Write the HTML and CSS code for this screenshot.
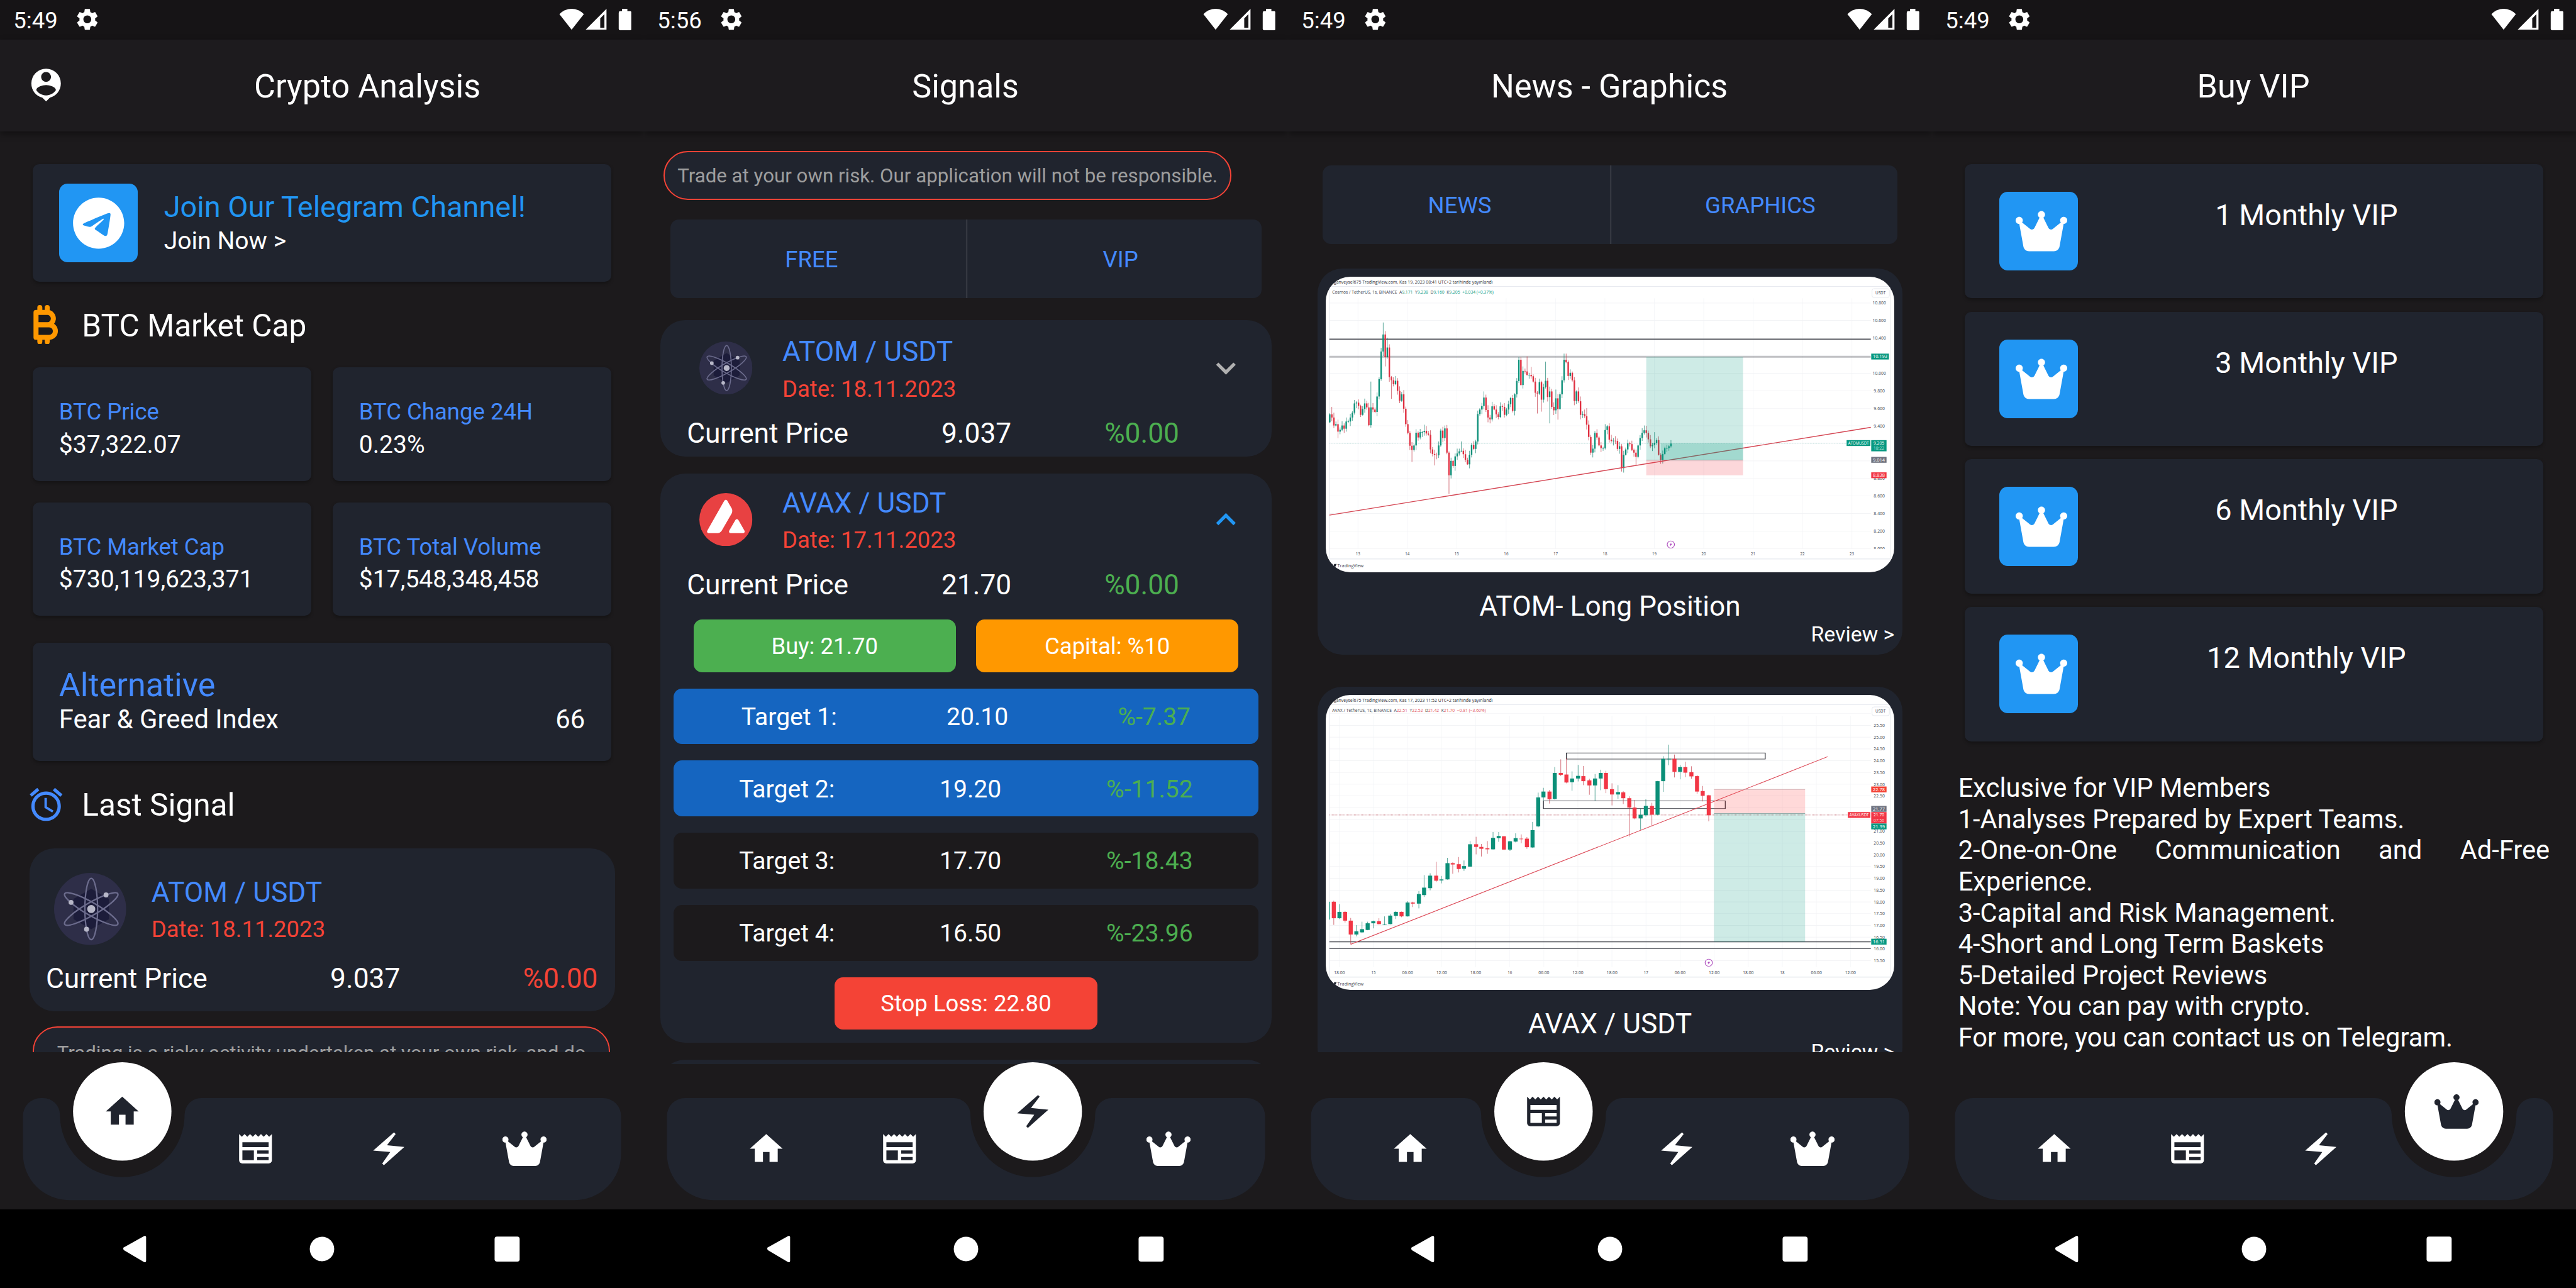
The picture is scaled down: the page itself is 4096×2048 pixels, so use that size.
FILE: index.html
```html
<!DOCTYPE html>
<html lang="en">
<head>
<meta charset="utf-8">
<title>Crypto Analysis</title>
<link rel="stylesheet" href="styles.css">
</head>
<body>
<svg class="defs" aria-hidden="true">
  <symbol id="i-gear" viewBox="0 0 24 24"><path d="M19.14 12.94c.04-.3.06-.61.06-.94 0-.32-.02-.64-.07-.94l2.03-1.58c.18-.14.23-.41.12-.61l-1.92-3.32c-.12-.22-.37-.29-.59-.22l-2.39.96c-.5-.38-1.03-.7-1.62-.94l-.36-2.54c-.04-.24-.24-.41-.48-.41h-3.84c-.24 0-.43.17-.47.41l-.36 2.54c-.59.24-1.13.57-1.62.94l-2.39-.96c-.22-.08-.47 0-.59.22L2.74 8.87c-.12.21-.08.47.12.61l2.03 1.58c-.05.3-.09.63-.09.94s.02.64.07.94l-2.03 1.58c-.18.14-.23.41-.12.61l1.92 3.32c.12.22.37.29.59.22l2.39-.96c.5.38 1.03.7 1.62.94l.36 2.54c.05.24.24.41.48.41h3.84c.24 0 .44-.17.47-.41l.36-2.54c.59-.24 1.13-.56 1.62-.94l2.39.96c.22.08.47 0 .59-.22l1.92-3.32c.12-.22.07-.47-.12-.61l-2.01-1.58zM12 15.6c-1.98 0-3.6-1.62-3.6-3.6s1.62-3.6 3.6-3.6 3.6 1.62 3.6 3.6-1.62 3.6-3.6 3.6z"/></symbol>
  <symbol id="i-state" viewBox="0 0 120 36">
    <path d="M20.5 35 0 9Q8.500 0 20.500 0T41 9Z"/>
    <path fill-rule="evenodd" d="M44 35 79 0V35ZM68.500 16V32H75.500V9Z"/>
    <path d="M105 0h9v4h4.500a2.500 2.500 0 0 1 2.500 2.500v27a2.500 2.500 0 0 1-2.500 2.500h-16.500a2.500 2.500 0 0 1-2.500-2.500v-27a2.500 2.500 0 0 1 2.500-2.500h3z"/>
  </symbol>
  <symbol id="i-account" viewBox="0 0 24 24"><path d="M12 2a9 9 0 0 0-9 9c0 4.170 2.840 7.670 6.690 8.690L12 22l2.310-2.310C18.160 18.670 21 15.170 21 11a9 9 0 0 0-9-9zm0 2c1.660 0 3 1.340 3 3s-1.340 3-3 3-3-1.340-3-3 1.340-3 3-3zm0 14.300c-2.500 0-4.710-1.280-6-3.220.03-1.990 4-3.080 6-3.080s5.970 1.090 6 3.080c-1.290 1.940-3.500 3.220-6 3.220z"/></symbol>
  <symbol id="i-telegram" viewBox="0 0 24 24"><path d="M12 2C6.480 2 2 6.480 2 12s4.480 10 10 10 10-4.480 10-10S17.520 2 12 2zm4.640 6.800c-.15 1.580-.8 5.420-1.130 7.190-.14.75-.42 1-.68 1.030-.58.05-1.020-.38-1.580-.75-.88-.58-1.380-.94-2.230-1.500-.99-.65-.35-1.010.22-1.590.15-.15 2.710-2.480 2.760-2.690a.2.2 0 0 0-.05-.18c-.06-.05-.14-.03-.21-.02-.09.02-1.490.95-4.220 2.790-.4.27-.76.41-1.080.4-.36-.01-1.040-.2-1.550-.37-.63-.2-1.120-.31-1.080-.66.02-.18.27-.36.74-.55 2.920-1.270 4.860-2.110 5.830-2.510 2.780-1.160 3.350-1.360 3.730-1.360.08 0 .27.02.39.12.1.08.13.19.14.27-.01.06.01.24 0 .38z"/></symbol>
  <symbol id="i-btc" viewBox="0 0 42 66">
    <path fill="none" stroke="#ff9800" stroke-width="8.400" stroke-linejoin="round" d="M4.500 12.500H24a9.600 10.250 0 0 1 0 20.500H4.500ZM4.500 33.200H26.600a10.400 10.500 0 0 1 0 21H4.500Z"/>
    <path fill="none" stroke="#ff9800" stroke-width="8.400" stroke-linecap="round" d="M10.900 4.300V11M23.300 4.300V11M10.900 55V61.700M23.300 55V61.700"/>
  </symbol>
  <symbol id="i-alarm" viewBox="0 0 24 24"><path d="M22 5.720l-4.600-3.860-1.290 1.530 4.600 3.860L22 5.720zM7.880 3.390L6.600 1.860 2 5.710l1.290 1.530 4.590-3.850zM12.500 8H11v6l4.750 2.850.75-1.230-4-2.370V8zM12 4c-4.970 0-9 4.030-9 9s4.020 9 9 9c4.970 0 9-4.030 9-9s-4.030-9-9-9zm0 16c-3.870 0-7-3.130-7-7s3.130-7 7-7 7 3.130 7 7-3.130 7-7 7z"/></symbol>
  <symbol id="i-home" viewBox="0 0 24 24"><path d="M10 20v-6h4v6h5v-8h3L12 3 2 12h3v8z"/></symbol>
  <symbol id="i-news" viewBox="0 0 24 24"><path d="M22 3l-1.670 1.670L18.670 3 17 4.670 15.330 3l-1.660 1.670L12 3l-1.670 1.670L8.670 3 7 4.670 5.330 3 3.670 4.670 2 3v16c0 1.100.9 2 2 2h16c1.100 0 2-.9 2-2V3zM11 19H4v-6h7v6zm9 0h-7v-2h7v2zm0-4h-7v-2h7v2zm0-4H4V8h16v3z"/></symbol>
  <symbol id="i-bolt" viewBox="0 0 24 24"><path d="M15.200 2 2.500 13.100 12.900 14 8 21 9 22 21.500 10.900 10.900 9.900 16.200 3Z"/></symbol>
  <symbol id="i-crown" viewBox="0 0 576 512"><path d="M309 106c11.400-7 19-19.700 19-34c0-22.100-17.900-40-40-40s-40 17.900-40 40c0 14.400 7.600 27 19 34L209.700 220.600c-9.100 18.200-32.700 23.400-48.600 10.700L72 160c5-6.700 8-15 8-24c0-22.100-17.900-40-40-40S0 113.900 0 136s17.900 40 40 40c.2 0 .5 0 .7 0L86.400 427.400c5.500 30.400 32 52.600 63 52.600H426.600c30.900 0 57.400-22.100 63-52.600L535.300 176c.2 0 .5 0 .7 0c22.100 0 40-17.900 40-40s-17.900-40-40-40s-40 17.900-40 40c0 9 3 17.300 8 24l-89.100 71.300c-15.900 12.700-39.500 7.500-48.600-10.700L309 106z"/></symbol>
  <symbol id="i-down" viewBox="0 0 24 24"><path d="M16.590 8.590L12 13.170 7.410 8.590 6 10l6 6 6-6z"/></symbol>
  <symbol id="i-up" viewBox="0 0 24 24"><path d="M12 8l-6 6 1.410 1.410L12 10.830l4.590 4.580L18 14z"/></symbol>
  <symbol id="i-atom" viewBox="0 0 100 100">
    <circle cx="50" cy="50" r="50" fill="#2e2e48"/>
    <path fill="#1c1c3a" d="M51.500 22 76 36V64L51.500 78 27 64V36Z"/>
    <g fill="none" stroke="#6c6c8d" stroke-width="2">
      <ellipse cx="51.500" cy="50" rx="8.800" ry="42.500"/>
      <ellipse cx="51.500" cy="50" rx="8.800" ry="42.500" transform="rotate(60 51.500 50)"/>
      <ellipse cx="51.500" cy="50" rx="8.800" ry="42.500" transform="rotate(-60 51.500 50)"/>
    </g>
    <g fill="#b8b8c8"><circle cx="51.500" cy="50" r="5.600"/><circle cx="72" cy="30.500" r="3.400"/><circle cx="23.500" cy="40.800" r="3.400"/><circle cx="45" cy="78" r="3.400"/></g>
  </symbol>
  <symbol id="i-avax" viewBox="0 0 254 254">
    <circle cx="127" cy="127" r="127" fill="#e84142"/>
    <path fill="#fff" d="M171.800 130.300c4.400-7.600 11.500-7.600 15.900 0l27.400 48.100c4.400 7.600.8 13.800-8 13.800h-55.200c-8.700 0-12.300-6.200-8-13.800zM118.800 37.700c4.400-7.600 11.400-7.600 15.800 0l6.100 11 14.400 25.300c3.500 7.200 3.500 15.700 0 22.900l-48.300 83.700c-4.400 6.800-11.700 11.100-19.800 11.600H46.900c-8.800 0-12.400-6.100-8-13.800z"/>
  </symbol>
  <symbol id="i-sysnav" viewBox="0 0 1080 132">
    <path d="M208 68.500a3 3 0 0 1 0-5L241 45q4-2 4 2V86q0 4-4 2Z"/>
    <circle cx="540" cy="66.500" r="20.500"/>
    <rect x="829.500" y="45.500" width="42" height="42" rx="4"/>
  </symbol>
</svg>

<main class="screens">
  <!-- Home -->
  <section class="phone">
    <div class="status"><span class="clock">5:49</span><svg class="gear"><use href="#i-gear"/></svg><svg class="state"><use href="#i-state"/></svg></div>
    <header class="appbar with-leading"><svg class="leading"><use href="#i-account"/></svg><h1>Crypto Analysis</h1></header>
    <div class="content">
      <div class="card telegram">
        <div class="tile"><svg class="tg-icon"><use href="#i-telegram"/></svg></div>
        <div class="telegram-text"><div class="tg-title">Join Our Telegram Channel!</div><div class="t15">Join Now &gt;</div></div>
      </div>
      <h2 class="section btc"><span class="section-icon"><svg class="btc-icon"><use href="#i-btc"/></svg></span><span>BTC Market Cap</span></h2>
      <div class="stats">
        <div class="card stat"><div class="stat-label">BTC Price</div><div class="t15">$37,322.07</div></div>
        <div class="card stat"><div class="stat-label">BTC Change 24H</div><div class="t15">0.23%</div></div>
        <div class="card stat"><div class="stat-label">BTC Market Cap</div><div class="t15">$730,119,623,371</div></div>
        <div class="card stat"><div class="stat-label">BTC Total Volume</div><div class="t15">$17,548,348,458</div></div>
      </div>
      <div class="card fear">
        <div class="fear-title">Alternative</div>
        <div class="fear-row"><span>Fear &amp; Greed Index</span><span>66</span></div>
      </div>
      <h2 class="section last"><span class="section-icon"><svg class="alarm"><use href="#i-alarm"/></svg></span><span>Last Signal</span></h2>
      <div class="last-signal">
        <div class="coin"><svg class="coin-icon"><use href="#i-atom"/></svg><div class="coin-text"><div class="pair">ATOM / USDT</div><div class="date">Date: 18.11.2023</div></div></div>
        <div class="price"><span>Current Price</span><span>9.037</span><span class="red">%0.00</span></div>
      </div>
      <div class="disclaimer">Trading is a risky activity undertaken at your own risk, and do</div>
    </div>
    <svg class="bottomnav" viewBox="0 0 1080 264">
      <path class="panel" d="M38.500 107A30 30 0 0 1 68.500 77H72.500A28 28 0 0 1 100.500 105A104.500 104.500 0 0 0 309.500 105A28 28 0 0 1 337.500 77H1011.500A30 30 0 0 1 1041.500 107V171A77 77 0 0 1 964.500 248H115.500A77 77 0 0 1 38.500 171Z"/>
      <circle cx="205" cy="99.500" r="82.500"/>
      <use class="active" href="#i-home" x="172" y="66.500" width="66" height="66"/>
      <use href="#i-news" x="395.500" y="129" width="66" height="66"/>
      <use href="#i-bolt" x="619" y="129" width="66" height="66"/>
      <use href="#i-crown" x="842.500" y="129" width="74.250" height="66"/>
    </svg>
    <svg class="sysnav"><use href="#i-sysnav"/></svg>
  </section>

  <!-- Signals -->
  <section class="phone">
    <div class="status"><span class="clock">5:56</span><svg class="gear"><use href="#i-gear"/></svg><svg class="state"><use href="#i-state"/></svg></div>
    <header class="appbar"><h1>Signals</h1></header>
    <div class="content tall">
      <div class="risk">Trade at your own risk. Our application will not be responsible.</div>
      <div class="tabs"><div class="tab">FREE</div><div class="tab">VIP</div></div>
      <article class="signal">
        <div class="coin"><svg class="coin-icon"><use href="#i-atom"/></svg><div class="coin-text"><div class="pair">ATOM / USDT</div><div class="date">Date: 18.11.2023</div></div><svg class="chevron"><use href="#i-down"/></svg></div>
        <div class="price"><span>Current Price</span><span>9.037</span><span class="green">%0.00</span></div>
      </article>
      <article class="signal open">
        <div class="coin"><svg class="coin-icon"><use href="#i-avax"/></svg><div class="coin-text"><div class="pair">AVAX / USDT</div><div class="date">Date: 17.11.2023</div></div><svg class="chevron"><use href="#i-up"/></svg></div>
        <div class="price"><span>Current Price</span><span>21.70</span><span class="green">%0.00</span></div>
        <div class="chips"><div class="chip buy">Buy: 21.70</div><div class="chip capital">Capital: %10</div></div>
        <div class="targets">
          <div class="target hit"><span>Target 1:</span><span>20.10</span><span class="green">%-7.37</span></div>
          <div class="target hit"><span>Target 2:</span><span>19.20</span><span class="green">%-11.52</span></div>
          <div class="target"><span>Target 3:</span><span>17.70</span><span class="green">%-18.43</span></div>
          <div class="target"><span>Target 4:</span><span>16.50</span><span class="green">%-23.96</span></div>
        </div>
        <div class="chips"><div class="chip stop">Stop Loss: 22.80</div></div>
      </article>
      <article class="signal"></article>
    </div>
    <svg class="bottomnav" viewBox="0 0 1080 264">
      <path class="panel" d="M38.500 107A30 30 0 0 1 68.500 77H520A28 28 0 0 1 547.500 105A104.500 104.500 0 0 0 756.500 105A28 28 0 0 1 784 77H1011.500A30 30 0 0 1 1041.500 107V171A77 77 0 0 1 964.500 248H115.500A77 77 0 0 1 38.500 171Z"/>
      <circle cx="652" cy="99.500" r="82.500"/>
      <use href="#i-home" x="172" y="129" width="66" height="66"/>
      <use href="#i-news" x="395.500" y="129" width="66" height="66"/>
      <use class="active" href="#i-bolt" x="619" y="66.500" width="66" height="66"/>
      <use href="#i-crown" x="842.500" y="129" width="74.250" height="66"/>
    </svg>
    <svg class="sysnav"><use href="#i-sysnav"/></svg>
  </section>

  <!-- News and graphics -->
  <section class="phone">
    <div class="status"><span class="clock">5:49</span><svg class="gear"><use href="#i-gear"/></svg><svg class="state"><use href="#i-state"/></svg></div>
    <header class="appbar"><h1>News - Graphics</h1></header>
    <div class="content">
      <div class="tabs news-tabs"><div class="tab">NEWS</div><div class="tab">GRAPHICS</div></div>
      <article class="graphic">
        <svg class="chart" id="chart-atom" viewBox="79 101 1411 1109" preserveAspectRatio="none"></svg>
        <div class="graphic-title">ATOM- Long Position</div>
        <div class="review">Review &gt;</div>
      </article>
      <article class="graphic">
        <svg class="chart" id="chart-avax" viewBox="79 103 1411 1109" preserveAspectRatio="none"></svg>
        <div class="graphic-title">AVAX / USDT</div>
        <div class="review">Review &gt;</div>
      </article>
    </div>
    <svg class="bottomnav" viewBox="0 0 1080 264">
      <path class="panel" d="M38.500 107A30 30 0 0 1 68.500 77H296.500A28 28 0 0 1 324 105A104.500 104.500 0 0 0 533 105A28 28 0 0 1 560.500 77H1011.500A30 30 0 0 1 1041.500 107V171A77 77 0 0 1 964.500 248H115.500A77 77 0 0 1 38.500 171Z"/>
      <circle cx="428.500" cy="99.500" r="82.500"/>
      <use href="#i-home" x="172" y="129" width="66" height="66"/>
      <use class="active" href="#i-news" x="395.500" y="66.500" width="66" height="66"/>
      <use href="#i-bolt" x="619" y="129" width="66" height="66"/>
      <use href="#i-crown" x="842.500" y="129" width="74.250" height="66"/>
    </svg>
    <svg class="sysnav"><use href="#i-sysnav"/></svg>
  </section>

  <!-- VIP plans -->
  <section class="phone">
    <div class="status"><span class="clock">5:49</span><svg class="gear"><use href="#i-gear"/></svg><svg class="state"><use href="#i-state"/></svg></div>
    <header class="appbar"><h1>Buy VIP</h1></header>
    <div class="content">
      <div class="plans">
        <div class="card plan"><div class="tile"><svg class="crown"><use href="#i-crown"/></svg></div><div class="plan-name">1 Monthly VIP</div></div>
        <div class="card plan"><div class="tile"><svg class="crown"><use href="#i-crown"/></svg></div><div class="plan-name">3 Monthly VIP</div></div>
        <div class="card plan"><div class="tile"><svg class="crown"><use href="#i-crown"/></svg></div><div class="plan-name">6 Monthly VIP</div></div>
        <div class="card plan"><div class="tile"><svg class="crown"><use href="#i-crown"/></svg></div><div class="plan-name">12 Monthly VIP</div></div>
      </div>
      <p class="perks">Exclusive for VIP Members<br>1-Analyses Prepared by Expert Teams.<br>2-One-on-One Communication and Ad-Free Experience.<br>3-Capital and Risk Management.<br>4-Short and Long Term Baskets<br>5-Detailed Project Reviews<br>Note: You can pay with crypto.<br>For more, you can contact us on Telegram.</p>
    </div>
    <svg class="bottomnav" viewBox="0 0 1080 264">
      <path class="panel" d="M38.500 107A30 30 0 0 1 68.500 77H743.500A28 28 0 0 1 771 105A104.500 104.500 0 0 0 980 105A28 28 0 0 1 1007.500 77H1013.500A28 28 0 0 1 1041.500 105V171A77 77 0 0 1 964.500 248H115.500A77 77 0 0 1 38.500 171Z"/>
      <circle cx="875.500" cy="99.500" r="82.500"/>
      <use href="#i-home" x="172" y="129" width="66" height="66"/>
      <use href="#i-news" x="395.500" y="129" width="66" height="66"/>
      <use href="#i-bolt" x="619" y="129" width="66" height="66"/>
      <use class="active" href="#i-crown" x="842.500" y="66.500" width="74.250" height="66"/>
    </svg>
    <svg class="sysnav"><use href="#i-sysnav"/></svg>
  </section>
</main>
<script src="charts.js"></script>
</body>
</html>
```

FILE: styles.css
```css
/* 1rem is 1/43.2 of the viewport width: each phone is 10.8rem wide */
html { font-size: calc(100vw / 43.2); }
* { box-sizing: border-box; }
body { margin: 0; background: #1c1a1c; overflow: hidden; }
h1, h2, p { margin: 0; font-weight: 400; }
svg { display: block; fill: #fff; flex: none; }
.defs { position: absolute; width: 0; height: 0; }

.screens { display: flex; width: 43.2rem; height: 21.6rem; }
.phone {
  width: 10.8rem; height: 21.6rem; display: flex; flex-direction: column;
  background: #1c1a1c; color: #fff; overflow: hidden;
  font-family: Roboto, "Liberation Sans", sans-serif; line-height: 1.172; white-space: nowrap;
}

.status { height: .66rem; flex: none; display: flex; align-items: center; padding: 0 .21rem 0 .225rem; background: #161416; }
.clock { font-size: .385rem; width: .745rem; margin-top: .04rem; }
.gear { width: .44rem; height: .44rem; margin-left: .275rem; }
.state { width: 1.21rem; height: .36rem; margin-left: auto; overflow: visible; }

.appbar {
  height: 1.54rem; flex: none; display: flex; align-items: center; justify-content: center;
  background: #1d1b1e; box-shadow: 0 .04rem .11rem rgba(0, 0, 0, .4); position: relative; z-index: 1;
}
.appbar h1 { font-size: .55rem; padding: .04rem .02rem 0 0; }
.with-leading { justify-content: flex-start; }
.leading { width: .66rem; height: .66rem; margin: 0 .44rem; }
.with-leading h1 { flex: 1; text-align: center; }

.content { flex: 1; min-height: 0; overflow: hidden; display: flex; flex-direction: column; }
.content > * { flex: none; }
.card { background: #20242e; border-radius: .11rem; box-shadow: 0 .03rem .06rem rgba(0, 0, 0, .28); }
.red { color: #f44336; }
.green { color: #4caf50; }
.t15 { font-size: .4125rem; }
.tile { width: 1.32rem; height: 1.32rem; flex: none; border-radius: .14rem; background: #2196f3; display: flex; align-items: center; }

.telegram { height: 1.98rem; margin: .55rem .55rem 0; padding: 0 .44rem; display: flex; align-items: center; gap: .44rem; }
.telegram .tile { justify-content: center; }
.tg-icon { width: 1.03rem; height: 1.03rem; }
.telegram-text { align-self: flex-start; padding-top: .43rem; }
.tg-title { font-size: .495rem; color: #2196f3; margin-bottom: .05rem; }

.section { display: flex; align-items: center; gap: .275rem; padding-left: .44rem; font-size: .5225rem; }
.section-icon { width: .66rem; height: .66rem; display: flex; justify-content: center; }
.btc { height: 1.43rem; }
.btc span:last-child { padding-top: .03rem; }
.last { height: 1.465rem; }
.btc-icon { width: .42rem; height: .66rem; }
.alarm { width: .66rem; height: .66rem; fill: #448aff; }

.stats { display: grid; grid-template-columns: 1fr 1fr; grid-auto-rows: 1.905rem; gap: .36rem; padding: 0 .55rem; }
.stat { padding: .53rem 0 0 .44rem; }
.stat-label { font-size: .385rem; color: #448aff; margin-bottom: .08rem; }

.fear { height: 1.98rem; margin: .455rem .55rem 0; padding: .38rem .44rem 0; }
.fear-title { font-size: .55rem; color: #448aff; }
.fear-row { display: flex; justify-content: space-between; font-size: .44rem; }

.coin { display: flex; }
.pair { font-size: .4675rem; color: #448aff; margin-bottom: .12rem; }
.date { font-size: .385rem; color: #f44336; }
.price { display: flex; font-size: .4675rem; }

.last-signal { height: 2.735rem; margin: 0 .49rem 0 .495rem; border-radius: .4125rem; background: #20242e; }
.last-signal .coin-icon { width: 1.21rem; height: 1.21rem; margin: .41rem .42rem 0 .415rem; }
.last-signal .coin-text { padding-top: .47rem; }
.last-signal .price { justify-content: space-between; padding: .3rem .285rem 0 .275rem; }
.disclaimer {
  height: 1.6rem; margin: .25rem .565rem 0 .55rem; border: .0275rem solid #f44336; border-radius: .4125rem;
  background: #20242e; color: #9e9e9e; font-size: .33rem; padding: .24rem 0 0 .385rem;
}

.risk {
  width: 9.53rem; height: .82rem; margin: .33rem 0 0 .325rem; border: .0275rem solid #f44336; border-radius: .41rem;
  background: #20242e; color: #9e9e9e; font-size: .33rem; display: flex; align-items: center; justify-content: center; padding-top: .025rem;
}
.tabs { display: flex; height: 1.325rem; margin: .33rem .44rem 0; border-radius: .14rem; background: #20242e; color: #448aff; font-size: .385rem; }
.tab { flex: 1; display: flex; align-items: center; justify-content: center; padding-top: .04rem; }
.tab:first-child { padding-right: .23rem; border-right: .02rem solid #6c6e75; }
.tab:last-child { padding-left: .2rem; }
.news-tabs { height: 1.32rem; margin: .575rem .58rem 0; }

.signal { height: 2.295rem; margin: .36rem .275rem 0; border-radius: .4125rem; background: #20242e; }
.signal ~ .signal { margin-top: .28rem; }
.signal.open { height: 9.55rem; padding-top: .001rem; }
.signal.open .coin { margin-top: -.035rem; }
.signal .coin-icon { width: .89rem; height: .89rem; margin: .36rem .5rem 0 .655rem; }
.signal .coin-text { padding-top: .27rem; }
.chevron { width: .66rem; height: .66rem; margin: .48rem .435rem 0 auto; fill: #b0b0b0; }
.open .chevron { fill: #2196f3; }
.signal .price { padding: .25rem 0 0 .445rem; gap: 1.56rem; }
.chips { display: flex; justify-content: center; gap: .34rem; margin-top: .3rem; }
.chip { width: 4.4rem; height: .88rem; border-radius: .14rem; font-size: .385rem; display: flex; align-items: center; justify-content: center; padding-top: .03rem; }
.buy { background: #4caf50; }
.capital { background: #ff9800; }
.stop { background: #f44336; }
.targets { display: flex; flex-direction: column; gap: .275rem; margin: .275rem .22rem 0; }
.targets + .chips { margin-top: .275rem; }
.target { height: .935rem; padding: .035rem .22rem 0; border-radius: .14rem; background: #1c1a1c; font-size: .4125rem; display: flex; align-items: center; justify-content: space-around; }
.hit { background: #1565c0; }

.graphic { height: 6.47rem; margin: .41rem .5rem 0; padding: .14rem .13rem 0; border-radius: .4125rem; background: #20242e; }
.graphic + .graphic { margin-top: .54rem; }
.chart { width: 9.54rem; height: 4.95rem; border-radius: .4125rem; background: #fff; font-family: "Open Sans", "Noto Sans", sans-serif; }
.graphic-title { font-size: .4675rem; text-align: center; margin-top: .305rem; }
.review { font-size: .3575rem; text-align: right; margin-top: -.018rem; }

.plans { display: flex; flex-direction: column; gap: .227rem; padding: .55rem .55rem 0; }
.plan { height: 2.25rem; display: flex; align-items: center; padding: 0 .14rem 0 .58rem; }
.crown { width: .866rem; height: .77rem; margin-left: .275rem; }
.plan-name { flex: 1; align-self: flex-start; padding-top: .56rem; text-align: center; font-size: .495rem; }
.perks { margin: .525rem .44rem 0; font-size: .44rem; line-height: .5225rem; text-align: justify; white-space: normal; }

.bottomnav { width: 10.8rem; height: 2.64rem; position: relative; }
.tall + .bottomnav { margin-top: -.21rem; }
.panel, .active { fill: #20242e; }
.sysnav { width: 10.8rem; height: 1.32rem; background: #000; }
```

FILE: charts.js
```js
// Candle charts. The horizontal and vertical units differ, so labels are
// stretched back by RATIO to keep their natural proportions.
const RATIO = 1.514;
const GREEN = '#089981', RED = '#e02f40', INK = '#40434e';

const rect = (x, y, w, h, fill, extra = '') => `<rect x="${x}" y="${y}" width="${w}" height="${h}" fill="${fill}" ${extra}/>`;
const line = (x1, y1, x2, y2, stroke, w = 1, extra = '') =>
  `<line x1="${x1}" y1="${y1}" x2="${x2}" y2="${y2}" stroke="${stroke}" stroke-width="${w}" ${extra}/>`;
const text = (x, y, s, o = {}) =>
  `<text transform="translate(${x} ${y}) scale(1 ${RATIO})" font-size="${o.size || 10.5}" fill="${o.fill || INK}" text-anchor="${o.anchor || 'start'}" ${o.len ? `textLength="${o.len}" lengthAdjust="spacingAndGlyphs"` : ''}>${s}</text>`;
const label = (y, s) => text(1452, y + 6, s, { anchor: 'middle', len: s.length * 5.5 });
const tag = (x, y, w, h, fill, s, ty) => rect(x, y, w, h, fill) + text(x + w / 2, ty, s, { anchor: 'middle', fill: '#fff', len: Math.min(w - 8, s.length * 6.6) });

function frame(dy, title, legend) {
  return line(79, 138 + dy, 1490, 138 + dy, '#e0e3eb', 2) + line(88, 138 + dy, 88, 1160 + dy, '#e0e3eb', 1.5) +
    line(1479, 138 + dy, 1479, 1160 + dy, '#e0e3eb', 1.5) + line(79, 1161 + dy, 1490, 1161 + dy, '#eceef2', 4) +
    text(86, 127 + dy, title, { len: 407, fill: '#2a2d37' }) + legend +
    rect(1434, 146 + dy, 43, 33, '#fff', 'stroke="#e0e3eb" stroke-width="1.5" rx="5" ry="7"') + text(1455, 168 + dy, 'USDT', { anchor: 'middle', len: 25 }) +
    `<path d="M88 ${1180 + dy}h9v13h-4v-9h-5zM100 ${1180 + dy}h6l-4 13h-4z" fill="#1e222d"/>` +
    text(108, 1193 + dy, 'TradingView', { len: 65, size: 12 });
}
function flash(x, y) {
  return `<ellipse cx="${x}" cy="${y}" rx="9" ry="13.500" fill="#fff" stroke="#ab47bc" stroke-width="1.800"/><path d="M${x + 2} ${y - 7}l-5.500 8h3l-1.500 6 5.500-8h-3z" fill="#ab47bc"/>`;
}
function candle(x, open, close, high, low, w, thin) {
  const up = close <= open;
  return line(x, high, x, low, up ? '#067a67' : '#c0303e', thin, 'stroke-opacity=".85"') +
    rect(x - w / 2, Math.min(open, close), w, Math.max(2, Math.abs(open - close)), up ? '#0b8f78' : w > 5 ? '#f23645' : RED);
}

// ATOM, one candle an hour
const closes = [618,630,660,655,683,676,660,672,645,645,630,612,577,574,586,620,598,577,592,659,592,600,609,551,486,382,318,402,367,478,490,505,492,530,567,543,597,655,688,736,752,735,687,705,685,685,680,690,695,750,767,770,772,735,679,707,671,762,847,793,812,776,765,757,755,768,789,806,770,733,748,720,617,600,587,555,602,630,637,588,600,618,628,588,590,620,600,580,557,605,543,493,413,508,455,457,470,470,475,495,537,540,497,563,515,492,553,532,590,603,558,598,543,490,413,422,474,462,490,568,532,569,620,617,625,657,703,762,747,688,705,735,745,745,677,663,713,718,717,718,748,738,820,770,750,727,730,752,762,778,735,707,688,678,688,712,738,733,725,715,770,790,767,745,745,738,728];
const highs = {1:590,20:495,26:273,28:330,46:657,56:660,64:720,75:532,92:402,96:400,98:440,105:420,110:525,114:390,115:390,121:517,125:595,134:655,153:660,158:685,166:715};
const lows = {4:708,20:668,30:560,27:438,40:797,51:810,58:917,67:808,78:652,93:510,101:615,103:608,107:652,111:638,128:780,143:837,149:808,162:803};
{
  let s = '';
  const ys = [200, 265, 331, 398, 464, 530, 596, 661, 727, 793, 859, 925, 991, 1057, 1122];
  const xs = [159, 281.5, 404, 526.5, 649, 771.5, 894, 1016.5, 1139, 1261.5, 1384];
  s += frame(0, 'doganveysel675 TradingView.com, Kas 19, 2023 08:41 UTC+2 tarihinde yayınlandı',
    text(95, 164, `Cosmos / TetherUS, 1s, BINANCE &#160;A<tspan fill="${GREEN}">9.171</tspan> &#160;Y<tspan fill="${GREEN}">9.238</tspan> &#160;D<tspan fill="${GREEN}">9.160</tspan> &#160;K<tspan fill="${GREEN}">9.205 &#160;+0.034 (+0.37%)</tspan>`, { len: 400 }));
  ys.forEach(y => { s += line(88, y, 1431, y, '#eff0f3', 1.6); });
  xs.forEach((x, i) => { s += line(x, 182, x, 1122, '#f1f2f5', 1.2) + text(x, 1148, 13 + i, { anchor: 'middle', len: 11 }); });
  s += line(88, 335.5, 1431, 335.5, '#45474f', 3.4) + line(88, 402.5, 1431, 402.5, '#45474f', 3.4);
  s += line(88, 727, 1431, 727, GREEN, 1, 'stroke-dasharray="1.500 2.500" stroke-opacity=".6"');
  let prev = 648;
  closes.forEach((c, i) => {
    const x = +(89 + i * 5.098).toFixed(1);
    const hi = highs[i] ?? Math.min(prev, c) - 4 - (i * 7) % 15;
    const lo = lows[i] ?? Math.max(prev, c) + 3 + (i * 11) % 16;
    s += candle(x, prev, c, hi, lo, 3.7, 1.5);
    prev = c;
  });
  s += line(88, 997, 1431, 667, '#d44552', 3.2);
  s += rect(874, 401, 240, 388, '#089981', 'fill-opacity=".2"') + rect(910, 727, 204, 62, '#089981', 'fill-opacity=".22"') +
    rect(874, 789, 240, 58, '#f23645', 'fill-opacity=".2"') + line(874, 789.5, 1114, 789.5, '#7a8b8a', 2);
  [[200, '10.800'], [265, '10.600'], [331, '10.400'], [464, '10.000'], [530, '9.800'], [596, '9.600'], [661, '9.400'], [859, '8.800'], [925, '8.600'], [991, '8.400'], [1057, '8.200'], [1122, '8.000']].forEach(([y, t]) => { s += label(y, t); });
  s += rect(1432, 1124, 44, 10, '#fff');
  s += tag(1432, 390, 44, 22, GREEN, '10.193', 407) + tag(1371, 715, 59, 22, GREEN, 'ATOMUSDT', 732) +
    rect(1432, 715, 38, 42, GREEN) + text(1451, 732, '9.205', { anchor: 'middle', fill: '#fff', len: 27 }) + text(1451, 751, '18:22', { anchor: 'middle', fill: '#bfe6df', len: 27 }) +
    tag(1432, 778, 38, 22, '#6f7380', '9.014', 795) + tag(1432, 836, 38, 22, '#f23645', '8.838', 853);
  s += flash(935, 1107);
  document.getElementById('chart-atom').innerHTML = s;
}

// AVAX: x, open, close, high, low
const avax = [[99,880,942,876,967],[113,942,918,889,945],[127,918,951,915,958],[141,951,1003,941,1040],[155,1003,991,968,1010],[169,995,983,955,998],[183,986,961,955,987],[197,961,953,951,980],[211,953,964,942,965],[225,965,963,935,968],[239,964,932,926,965],[253,933,918,915,945],[267,918,935,917,938],[282,935,883,878,936],[295,883,887,880,900],[310,887,851,840,905],[323,855,827,780,862],[338,829,782,773,837],[353,782,801,730,806],[366,800,796,783,811],[381,796,735,715,797],[394,735,740,732,775],[409,739,757,712,770],[422,756,746,725,764],[437,748,664,652,749],[452,664,674,636,702],[465,674,681,663,710],[480,679,683,652,700],[494,683,640,618,684],[508,641,633,618,655],[521,634,684,633,686],[536,684,653,651,689],[550,654,641,623,657],[564,643,644,627,660],[578,643,675,637,681],[592,676,611,580,678],[606,597,488,470,600],[619,488,466,452,500],[634,466,495,460,511],[647,494,396,374,496],[662,396,403,345,408],[676,402,432,340,435],[690,431,417,390,463],[705,417,407,366,428],[718,408,427,370,442],[733,424,443,418,478],[747,443,417,400,500],[761,417,396,384,461],[774,396,457,388,472],[789,457,477,435,518],[804,477,468,442,493],[817,469,491,465,513],[832,491,526,484,635],[845,526,567,498,570],[860,567,553,530,610],[873,555,520,495,560],[888,520,553,508,595],[902,553,427,426,555],[916,427,343,333,467],[930,343,343,290,367],[944,343,392,327,413],[958,392,374,366,420],[971,374,395,354,412],[986,393,409,371,418],[1000,408,466,404,474],[1014,464,482,445,503],[1029,480,555,478,578]];
{
  let s = '';
  s += frame(2, 'doganveysel675 TradingView.com, Kas 17, 2023 11:52 UTC+2 tarihinde yayınlandı',
    text(95, 166, `AVAX / TetherUS, 1s, BINANCE &#160;A<tspan fill="#e05260">22.51</tspan> &#160;Y<tspan fill="#e05260">22.52</tspan> &#160;D<tspan fill="#e05260">21.42</tspan> &#160;K<tspan fill="#e05260">21.70 &#160;−0.81 (−3.60%)</tspan>`, { len: 381 }));
  for (let i = -1; i < 21; i++) { const y = 217.5 + i * 44.2; s += line(88, y, 1431, y, '#eff0f3', 1.6); }
  ['18:00', '15', '06:00', '12:00', '18:00', '16', '06:00', '12:00', '18:00', '17', '06:00', '12:00', '18:00', '18', '06:00', '12:00'].forEach((t, i) => {
    const x = 113 + i * 84.5;
    s += line(x, 182, x, 1126, '#f1f2f5', 1.2) + text(x, 1151, t, { anchor: 'middle', len: t.length * 5.4 });
  });
  s += line(88, 1031, 1431, 1031, '#2a2c34', 3) + line(88, 1056, 1431, 1056, '#2a2c34', 2.6);
  s += line(88, 554, 1431, 554, '#b04450', 1.5, 'stroke-dasharray="1.700 1.700"');
  s += '<rect x="676" y="321" width="493" height="23" fill="none" stroke="#2a2c34" stroke-width="2"/><rect x="619" y="501" width="451" height="29" fill="none" stroke="#2a2c34" stroke-width="2"/>';
  s += line(89, 880, 89, 947, GREEN, 2);
  avax.forEach(k => { s += candle(...k, 10, 1.5); });
  s += line(141, 1040, 1324, 335, '#dc4654', 2.4);
  s += rect(1042, 458, 226, 90, '#ff5252', 'fill-opacity=".22"') + rect(1042, 548, 226, 483, '#089981', 'fill-opacity=".2"') + line(1042, 458, 1268, 458, '#c9a0a4', 1.5) + line(1042, 548, 1268, 548, '#7a9a98', 2);
  ['25.50', '25.00', '24.50', '24.00', '23.50', '23.00', '22.50', '', '', '21.00', '20.50', '20.00', '19.50', '19.00', '18.50', '18.00', '17.50', '17.00', '16.50', '16.00', '15.50'].forEach((t, i) => {
    if (t) s += label(217.5 + i * 44.2, t);
  });
  s += tag(1432, 447, 38, 22, '#f44336', '22.78', 464) + tag(1432, 520, 38, 22, '#6f7380', '21.77', 537) +
    tag(1374, 543, 56, 22, '#f23645', 'AVAXUSDT', 560) + rect(1432, 543, 38, 43, '#f23645') +
    text(1451, 560, '21.70', { anchor: 'middle', fill: '#fff', len: 27 }) + text(1451, 580, '07:56', { anchor: 'middle', fill: '#fbc4c9', len: 27 }) +
    tag(1432, 586, 38, 22, GREEN, '21.39', 603) + tag(1432, 1019, 38, 22, GREEN, '16.31', 1036);
  s += flash(1029, 1109);
  document.getElementById('chart-avax').innerHTML = s;
}
```
